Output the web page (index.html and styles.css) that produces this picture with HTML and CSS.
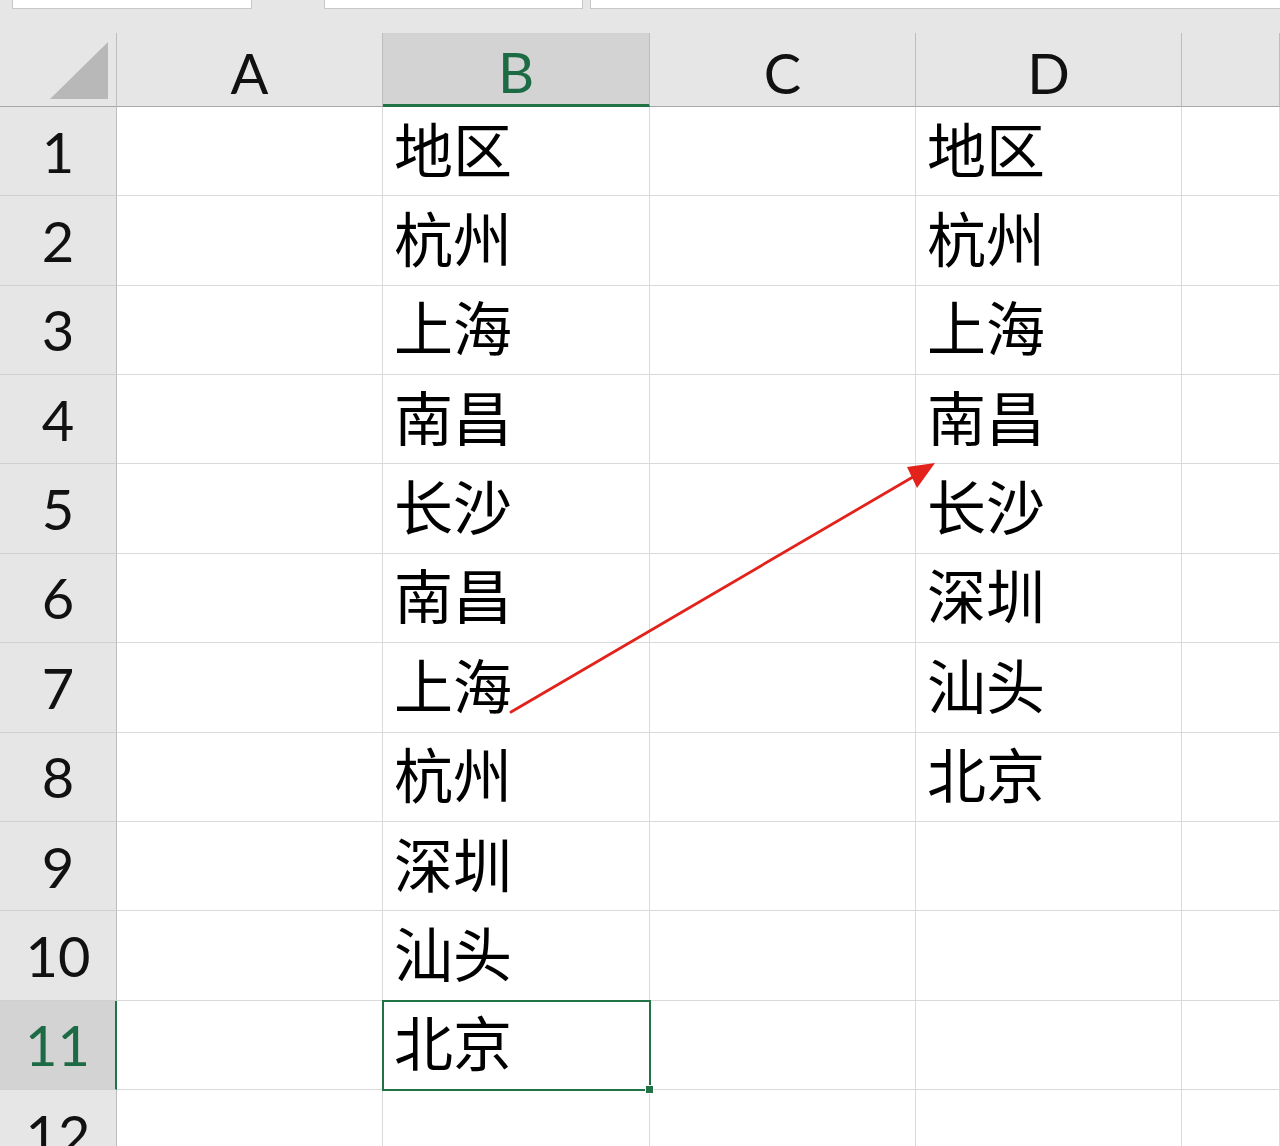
FILE: index.html
```html
<!DOCTYPE html>
<html lang="zh-CN">
<head>
  <meta charset="UTF-8">
  <title>Sheet1</title>
  <link rel="stylesheet" href="styles.css">
</head>
<body>
  <div class="page">
    <div class="toolbar">
      <div class="box box-name"></div>
      <div class="box box-mid"></div>
      <div class="box box-formula"></div>
    </div>

    <div class="sheet">
      <div class="corner">
        <svg width="58" height="57" viewBox="0 0 58 57"><polygon points="58,0 58,57 0,57" fill="#b8b8b8"/></svg>
      </div>
      <div class="col-head">A</div>
      <div class="col-head active">B</div>
      <div class="col-head">C</div>
      <div class="col-head">D</div>
      <div class="col-head"></div>

      <div class="row-head">1</div><div class="cell"></div><div class="cell">地区</div><div class="cell"></div><div class="cell">地区</div><div class="cell"></div>
      <div class="row-head">2</div><div class="cell"></div><div class="cell">杭州</div><div class="cell"></div><div class="cell">杭州</div><div class="cell"></div>
      <div class="row-head">3</div><div class="cell"></div><div class="cell">上海</div><div class="cell"></div><div class="cell">上海</div><div class="cell"></div>
      <div class="row-head">4</div><div class="cell"></div><div class="cell">南昌</div><div class="cell"></div><div class="cell">南昌</div><div class="cell"></div>
      <div class="row-head">5</div><div class="cell"></div><div class="cell">长沙</div><div class="cell"></div><div class="cell">长沙</div><div class="cell"></div>
      <div class="row-head">6</div><div class="cell"></div><div class="cell">南昌</div><div class="cell"></div><div class="cell">深圳</div><div class="cell"></div>
      <div class="row-head">7</div><div class="cell"></div><div class="cell">上海</div><div class="cell"></div><div class="cell">汕头</div><div class="cell"></div>
      <div class="row-head">8</div><div class="cell"></div><div class="cell">杭州</div><div class="cell"></div><div class="cell">北京</div><div class="cell"></div>
      <div class="row-head">9</div><div class="cell"></div><div class="cell">深圳</div><div class="cell"></div><div class="cell"></div><div class="cell"></div>
      <div class="row-head">10</div><div class="cell"></div><div class="cell">汕头</div><div class="cell"></div><div class="cell"></div><div class="cell"></div>
      <div class="row-head active">11</div><div class="cell"></div><div class="cell selected">北京<span class="handle"></span></div><div class="cell"></div><div class="cell"></div><div class="cell"></div>
      <div class="row-head">12</div><div class="cell"></div><div class="cell"></div><div class="cell"></div><div class="cell"></div><div class="cell"></div>
    </div>

    <svg class="arrow" width="1280" height="1146" viewBox="0 0 1280 1146">
      <line x1="511" y1="712" x2="918" y2="474" stroke="#e3221c" stroke-width="2.8" stroke-linecap="round"/>
      <polygon points="935,463 907,467 917,488" fill="#e3221c"/>
    </svg>
  </div>
</body>
</html>
```

FILE: styles.css
```css
body {
  margin: 0;
  padding: 0;
  overflow: hidden;
  background: #ffffff;
}
.page {
  position: relative;
  width: 1280px;
  height: 1146px;
  overflow: hidden;
}
.toolbar {
  height: 33px;
  background: #e6e6e6;
  display: flex;
  align-items: flex-start;
}
.box {
  height: 8px;
  background: #ffffff;
  border: 1px solid #c8c8c8;
  border-top: none;
}
.box-name {
  margin-left: 12px;
  width: 238px;
}
.box-mid {
  margin-left: 72px;
  width: 257px;
}
.box-formula {
  margin-left: 7px;
  flex: 1;
  border-right: none;
}
.sheet {
  display: grid;
  grid-template-columns: 117px 266px 267px 266px 266px 1fr;
  grid-template-rows: 74px repeat(12, 89.36px);
}
.corner {
  background: #e6e6e6;
  border-right: 1px solid #bdbdbd;
  border-bottom: 1px solid #a8a8a8;
  box-sizing: border-box;
  padding: 9px 8px 0 0;
  display: flex;
  justify-content: flex-end;
  align-items: flex-start;
}
.col-head {
  background: #e6e6e6;
  border-right: 1px solid #bdbdbd;
  border-bottom: 1px solid #a8a8a8;
  box-sizing: border-box;
  display: flex;
  align-items: center;
  justify-content: center;
  padding-top: 6px;
  font-family: Lato, "Open Sans", sans-serif;
  font-weight: 400;
  font-size: 56px;
  color: #111111;
}
.col-head.active {
  background: #d3d3d3;
  color: #1d6b45;
  border-bottom: 3px solid #217346;
}
.row-head {
  background: #e6e6e6;
  border-right: 1px solid #bdbdbd;
  border-bottom: 1px solid #d0d0d0;
  box-sizing: border-box;
  display: flex;
  align-items: center;
  justify-content: center;
  font-family: Lato, "Open Sans", sans-serif;
  font-weight: 400;
  font-size: 56px;
  color: #111111;
}
.row-head.active {
  background: #d3d3d3;
  color: #1d6b45;
  border-right: 2px solid #217346;
}
.cell {
  position: relative;
  border-right: 1px solid #d9d9d9;
  border-bottom: 1px solid #d9d9d9;
  box-sizing: border-box;
  display: flex;
  align-items: center;
  padding-left: 11px;
  padding-bottom: 8px;
  font-family: "Noto Sans CJK SC", "Noto Sans", sans-serif;
  font-size: 59px;
  color: #000000;
  line-height: 1;
}
.cell.selected {
  z-index: 1;
  outline: 2px solid #217346;
  outline-offset: -1px;
}
.handle {
  position: absolute;
  right: -5px;
  bottom: -5px;
  width: 7px;
  height: 7px;
  background: #217346;
  border: 1px solid #ffffff;
}
.arrow {
  position: absolute;
  top: 0;
  left: 0;
  pointer-events: none;
}
```
